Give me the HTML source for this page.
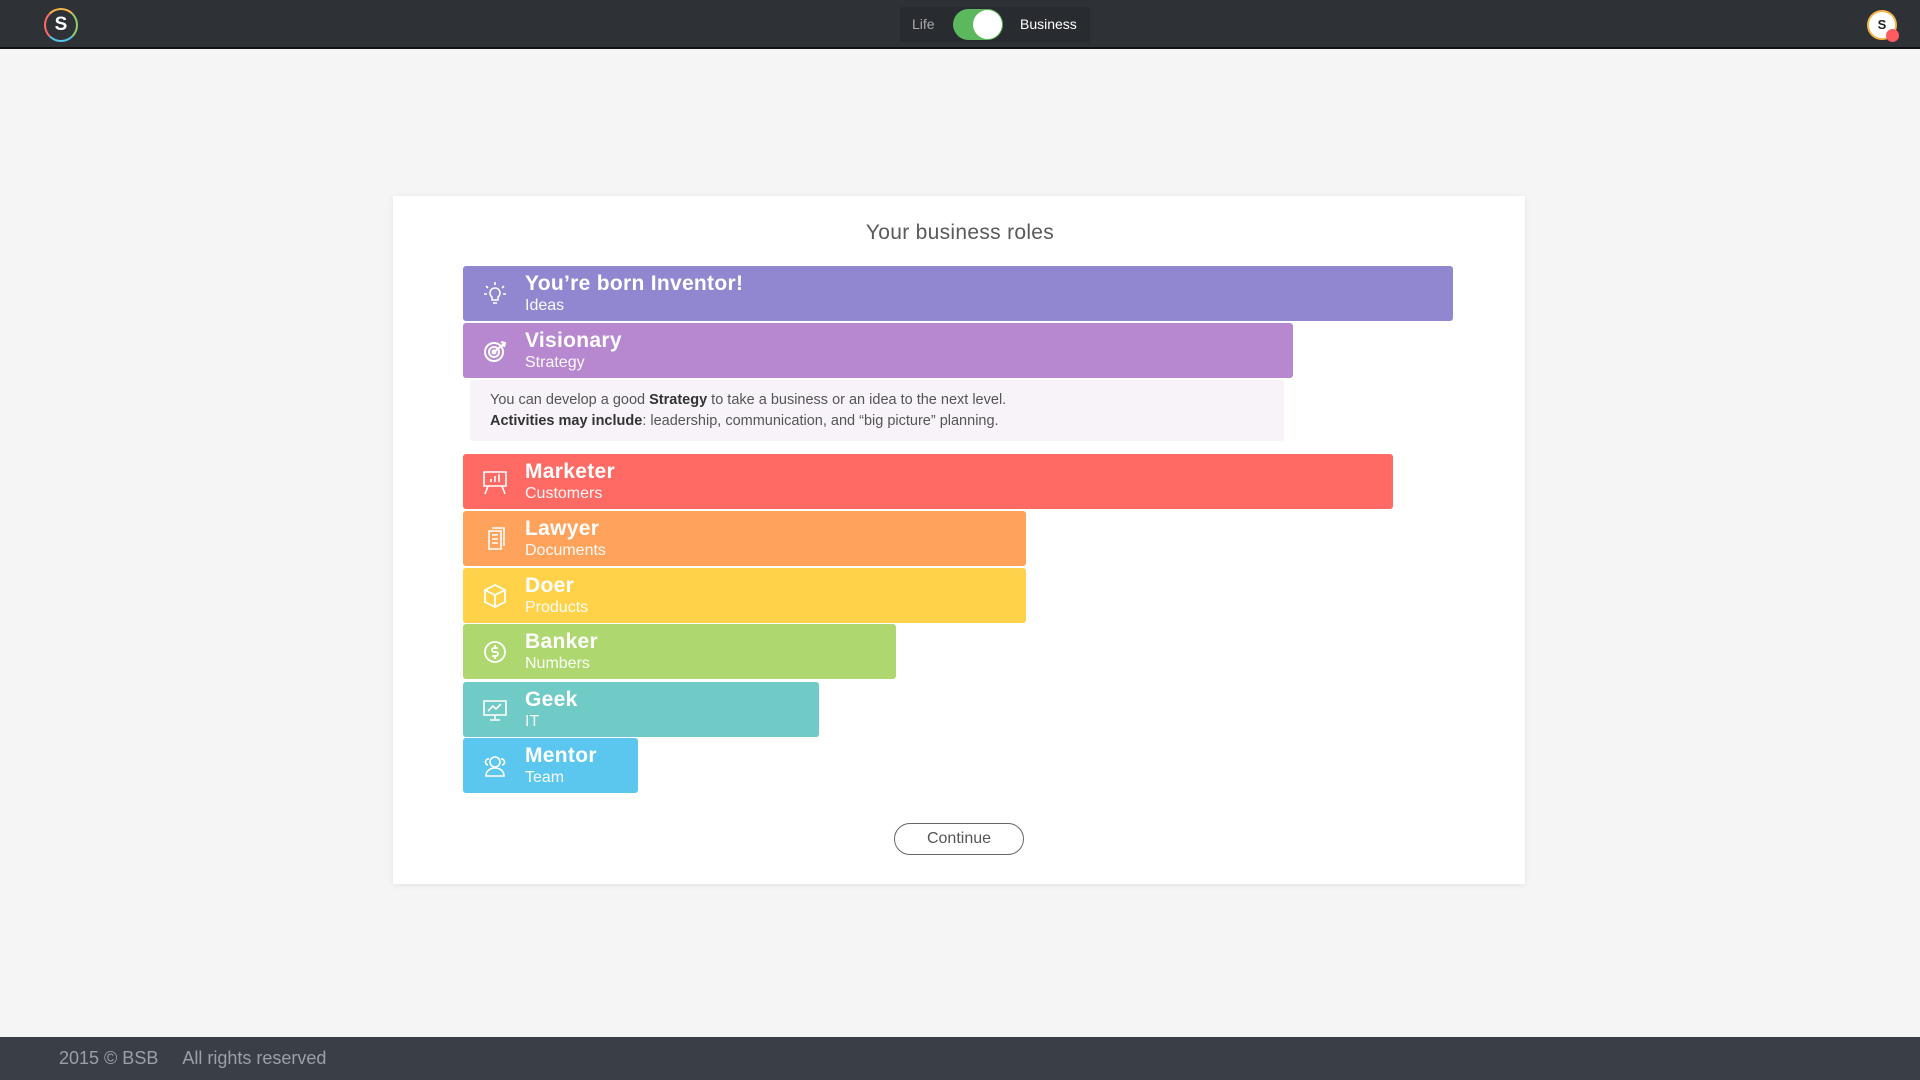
<!DOCTYPE html>
<html><head><meta charset="utf-8"><style>
*{margin:0;padding:0;box-sizing:border-box}
body{width:1920px;height:1080px;background:#f5f5f5;font-family:"Liberation Sans",sans-serif;position:relative;overflow:hidden}
.hdr{position:absolute;left:0;top:0;width:1920px;height:49px;background:#2e3136;border-bottom:2px solid #111}
.logo{position:absolute;left:44px;top:8px;width:34px;height:34px;border-radius:50%;border:2px solid #f5b54a;border-right-color:#8fd16b;border-bottom-color:#58c4e6;border-left-color:#ff6b64;color:#fff;font-weight:bold;font-size:19px;text-align:center;line-height:30px}
.tog{position:absolute;left:900px;top:7px;width:190px;height:35px;background:#282b30;border-radius:2px}
.tog .l{position:absolute;left:12px;top:9px;color:#aaa;font-size:14px}
.tog .sw{position:absolute;left:53px;top:2px;width:50px;height:31px;border-radius:16px;background:#5cb85c}
.tog .sw i{position:absolute;right:1px;top:1px;width:29px;height:29px;border-radius:50%;background:#fff}
.tog .b{position:absolute;left:120px;top:9px;color:#fff;font-size:14px}
.av{position:absolute;left:1867px;top:10px;width:30px;height:30px;border-radius:50%;background:#fff;border:2px solid #f5b54a;font-size:13px;font-weight:bold;text-align:center;line-height:26px;color:#222}
.av i{position:absolute;right:-4px;bottom:-4px;width:13px;height:13px;border-radius:50%;background:#ff5a5f}
.card{position:absolute;left:393px;top:196px;width:1132px;height:688px;background:#fff;box-shadow:0 1px 6px rgba(0,0,0,.08)}
.title{position:absolute;left:0;width:100%;top:221px;text-align:center;font-size:21px;color:#5a5a5a;letter-spacing:.3px}
.bar{position:absolute;left:463px;height:55px;border-radius:3px;color:#fff}
.bar .t{position:absolute;left:62px;top:6px;font-size:21px;font-weight:600;letter-spacing:.3px}
.bar .s{position:absolute;left:62px;top:31px;font-size:16px;opacity:.95}
.bar svg{position:absolute;left:18px;top:14px;width:28px;height:28px}
.desc{position:absolute;left:470px;top:380px;width:814px;height:61px;background:#f7f3f9;border-radius:3px;font-size:14.5px;color:#555;padding:10px 20px;line-height:21px}
.desc b{color:#333}
.btn{position:absolute;left:894px;top:823px;width:130px;height:32px;border:1.5px solid #666;border-radius:16px;text-align:center;line-height:29px;font-size:16px;color:#555}
.ftr{position:absolute;left:0;top:1037px;width:1920px;height:43px;background:#3a3f47;color:#9aa0a8;font-size:18px;line-height:43px}
</style></head><body>
<div class="hdr">
<div class="logo">S</div>
<div class="tog"><span class="l">Life</span><div class="sw"><i></i></div><span class="b">Business</span></div>
<div class="av">S<i></i></div>
</div>
<div class="card"></div>
<div class="title">Your business roles</div>

<div class="bar" style="top:266px;width:990px;background:#9087d0"><svg viewBox="0 0 28 28" fill="none" stroke="#fff" stroke-width="1.6"><path d="M14 8a5 5 0 0 0-3 9v3h6v-3a5 5 0 0 0-3-9zM12 23h4M14 2v3M5 6l2 2M23 6l-2 2M3 14h3M25 14h-3"/></svg><div class="t">You’re born Inventor!</div><div class="s">Ideas</div></div>
<div class="bar" style="top:323px;width:830px;background:#b788d0"><svg viewBox="0 0 28 28" fill="none" stroke="#fff" stroke-width="2"><circle cx="13" cy="15" r="9"/><circle cx="13" cy="15" r="5"/><circle cx="13" cy="15" r="1.5"/><path d="M13 15l11-9M20 5l4 1-1 4"/></svg><div class="t">Visionary</div><div class="s">Strategy</div></div>
<div class="desc">You can develop a good <b>Strategy</b> to take a business or an idea to the next level.<br><b>Activities may include</b>: leadership, communication, and “big picture” planning.</div>
<div class="bar" style="top:454px;width:930px;background:#ff6b64"><svg viewBox="0 0 28 28" fill="none" stroke="#fff" stroke-width="1.6"><path d="M3 4h22v14H3zM7 18l-3 8M21 18l3 8M10 14v-3M14 14V8M18 14V6"/></svg><div class="t">Marketer</div><div class="s">Customers</div></div>
<div class="bar" style="top:511px;width:563px;background:#ffa25c"><svg viewBox="0 0 28 28" fill="none" stroke="#fff" stroke-width="1.6"><path d="M8 6h12v18H8zM11 3h12v18M11 10h6M11 14h6M11 18h6"/></svg><div class="t">Lawyer</div><div class="s">Documents</div></div>
<div class="bar" style="top:568px;width:563px;background:#ffd24a"><svg viewBox="0 0 28 28" fill="none" stroke="#fff" stroke-width="1.8"><path d="M14 3l10 5v12l-10 5-10-5V8zM4 8l10 5 10-5M14 13v12"/></svg><div class="t">Doer</div><div class="s">Products</div></div>
<div class="bar" style="top:624px;width:433px;background:#aed86f"><svg viewBox="0 0 28 28" fill="none" stroke="#fff" stroke-width="1.8"><circle cx="14" cy="14" r="10"/><path d="M17 10h-4a2 2 0 0 0 0 4h2a2 2 0 0 1 0 4h-4M14 7v3M14 18v3"/></svg><div class="t">Banker</div><div class="s">Numbers</div></div>
<div class="bar" style="top:682px;width:356px;background:#70cac6"><svg viewBox="0 0 28 28" fill="none" stroke="#fff" stroke-width="1.6"><path d="M3 5h22v14H3zM14 19v4M9 24h10M7 15l5-5 3 3 5-5"/></svg><div class="t">Geek</div><div class="s">IT</div></div>
<div class="bar" style="top:738px;width:175px;background:#5bc7ee"><svg viewBox="0 0 28 28" fill="none" stroke="#fff" stroke-width="1.6"><circle cx="14" cy="10" r="5"/><path d="M5 24c0-5 4-8 9-8s9 3 9 8zM7 13a3 3 0 1 1 1-6M21 13a3 3 0 1 0-1-6"/></svg><div class="t">Mentor</div><div class="s">Team</div></div>

<div class="btn">Continue</div>
<div class="ftr"><span style="margin-left:59px">2015 © BSB</span><span style="margin-left:24px">All rights reserved</span></div>
</body></html>
